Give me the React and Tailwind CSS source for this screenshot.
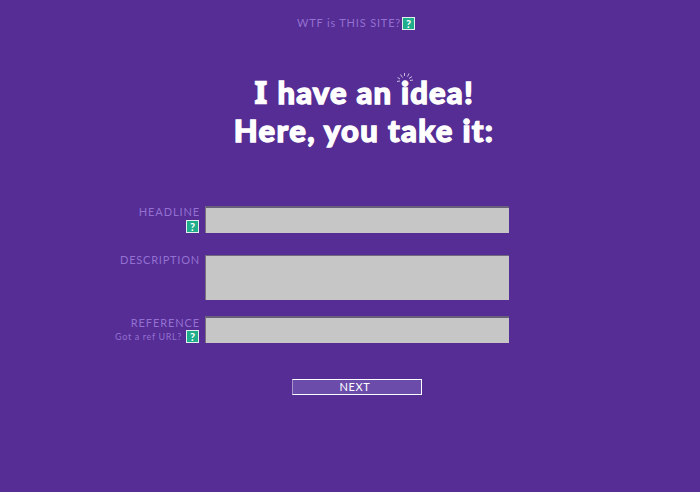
function Help({ className = "" }) {
  return (
    <span
      className={`flex h-[13px] w-[13px] shrink-0 items-center justify-center border border-[#e4efed] bg-[#20ad8c] font-['Lato',sans-serif] text-[11px] leading-none font-bold text-white ${className}`}
    >
      ?
    </span>
  );
}

function Label({ children, className = "" }) {
  return (
    <div className={`h-[14px] text-[11px] leading-[14px] whitespace-nowrap ${className}`}>
      {children}
    </div>
  );
}

function Rays() {
  return (
    <svg
      className="absolute top-[-1px] left-[-5px] h-[12px] w-[18px]"
      viewBox="0 0 18 12"
      fill="none"
      stroke="#d9cdea"
      strokeWidth="0.9"
    >
      <path d="M1 9.5 4 9M1.5 5.5 4 7M4.5 2.5 6.5 5.5M8.5 1v3M13 1.5 11.5 4.5M16 4.5 13 6.5M17 8 14 8.5" />
    </svg>
  );
}

export default function App() {
  return (
    <main className="flex h-[492px] w-[700px] flex-col overflow-hidden bg-[#552d94] font-['Lato',sans-serif] text-[#9470d2]">
      <div className="mt-[15px] ml-[297px] flex h-[17px] items-center">
        <span className="mt-[-1px] w-[105px] text-[11px] leading-[14px] tracking-[0.82px] whitespace-nowrap">
          WTF is THIS SITE?
        </span>
        <Help />
      </div>

      <h1 className="mt-[41px] ml-[233px] flex w-[262px] flex-col items-center font-['Lato',sans-serif] text-[31px] leading-[39px] font-black whitespace-nowrap text-white [-webkit-text-stroke:1.3px_white]">
        <span className="h-[39px] tracking-[1.2px]">
          <span className="font-['Noto_Sans',sans-serif] leading-none [-webkit-text-stroke:0.4px_white]">I</span> have an{" "}
          <span className="relative inline-block h-[39px] align-top">
            i<Rays />
          </span>
          dea!
        </span>
        <span className="mt-[-1px] tracking-[1.35px]">Here, you take it:</span>
      </h1>

      <form className="mt-[55px] flex flex-col">
        <div className="mt-[1px] flex">
          <div className="mr-[5px] flex w-[200px] flex-col items-end">
            <Label className="mt-[-1px] tracking-[0.9px]">HEADLINE</Label>
            <Help className="mt-[1px] mr-[1px]" />
          </div>
          <div className="h-[27px] w-[304px] border-t-2 border-l border-t-[#68607a] border-l-[#77717f] bg-[#c6c6c6]" />
        </div>
        <div className="mt-[22px] flex">
          <div className="mr-[5px] flex w-[200px] flex-col items-end">
            <Label className="mt-[-2px] tracking-[0.78px]">DESCRIPTION</Label>
          </div>
          <div className="h-[45px] w-[304px] border-t border-l border-t-[#716a7c] border-l-[#77717f] bg-[#c6c6c6]" />
        </div>
        <div className="mt-[16px] flex">
          <div className="mr-[5px] flex w-[200px] flex-col items-end">
            <Label className="tracking-[0.9px]">REFERENCE</Label>
            <div className="mr-[1px] flex items-center gap-1">
              <span className="text-[9px] leading-[13px] tracking-[0.65px] whitespace-nowrap">
                Got a ref URL?
              </span>
              <Help />
            </div>
          </div>
          <div className="h-[27px] w-[304px] border-t-2 border-l border-t-[#68607a] border-l-[#77717f] bg-[#c6c6c6]" />
        </div>
        <button
          type="button"
          className="mt-[36px] ml-[292px] flex h-[16px] w-[130px] items-center justify-center border border-white border-l-[#a795c7] bg-[#6b4caa] pr-1 pb-0.5 text-[11px] leading-none tracking-[0.6px] text-white"
        >
          NEXT
        </button>
      </form>
    </main>
  );
}
